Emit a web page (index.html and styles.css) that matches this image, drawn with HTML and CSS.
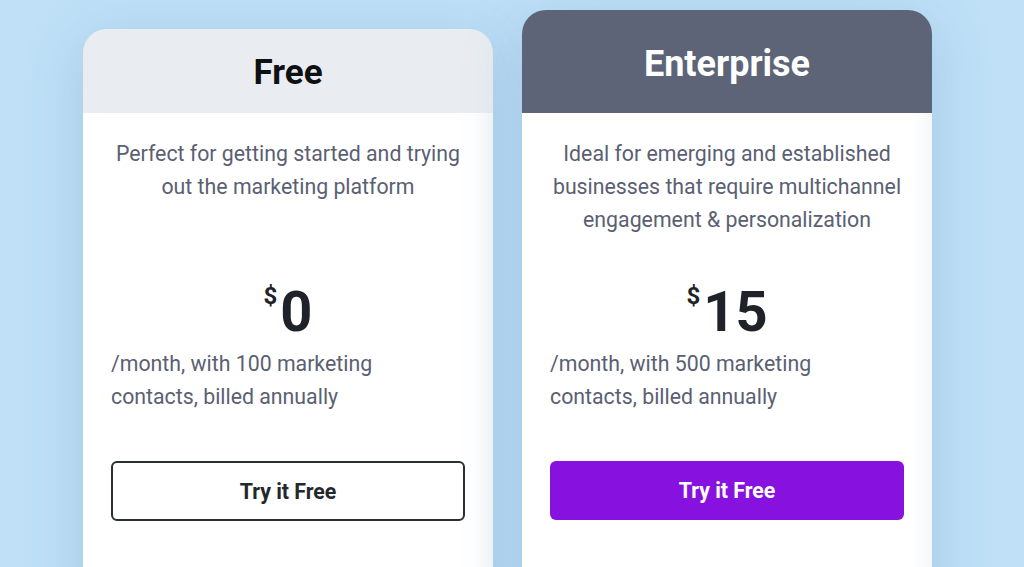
FILE: index.html
```html
<!DOCTYPE html>
<html lang="en">
<head>
<meta charset="utf-8">
<title>Pricing</title>
<link rel="stylesheet" href="styles.css">
</head>
<body>
<main class="plans">
  <section class="card card-free">
    <header class="card-head head-light"><h2>Free</h2></header>
    <div class="card-body">
      <p class="desc">Perfect for getting started and trying out the marketing platform</p>
      <div class="price"><span class="cur">$</span><span class="amt">0</span></div>
      <p class="period">/month, with 100 marketing contacts, billed annually</p>
      <a class="btn btn-outline" href="#">Try it Free</a>
    </div>
  </section>
  <section class="card card-ent">
    <header class="card-head head-dark"><h2>Enterprise</h2></header>
    <div class="card-body">
      <p class="desc">Ideal for emerging and established businesses that require multichannel engagement &amp; personalization</p>
      <div class="price"><span class="cur">$</span><span class="amt">15</span></div>
      <p class="period">/month, with 500 marketing contacts, billed annually</p>
      <a class="btn btn-fill" href="#">Try it Free</a>
    </div>
  </section>
</main>
</body>
</html>
```
FILE: styles.css
```css
* { box-sizing: border-box; }
html, body { margin: 0; height: 100%; }
body {
  background: #bfe0f7;
  font-family: Roboto, "Liberation Sans", sans-serif;
  overflow: hidden;
}
.plans {
  display: flex;
  align-items: flex-start;
  gap: 29px;
  padding: 10px 0 0 83px;
}
.card {
  width: 410px;
  border-radius: 24px 24px 0 0;
  overflow: hidden;
  box-shadow: 0 10px 60px rgba(70, 120, 170, 0.22);
  height: 620px;
  display: flex;
  flex-direction: column;
}
.card-free { margin-top: 19px; }
.card-head {
  display: flex;
  align-items: center;
  justify-content: center;
}
.card-head h2 { margin: 0; font-weight: 700; }
.head-light { background: #e9edf1; height: 84px; }
.head-light h2 { color: #0f1012; font-size: 35px; padding-top: 2px; }
.head-dark { background: #5e6477; height: 103px; }
.head-dark h2 { color: #ffffff; font-size: 36px; padding-top: 4px; }
.card-body {
  flex: 1;
  background: linear-gradient(to right, #ffffff 95%, #f6f7f9);
  padding: 24px 20px 0 28px;
}
.desc {
  margin: 0 8px 48px 0;
  min-height: 99px;
  text-align: center;
  color: #5a6072;
  font-size: 21.3px;
  line-height: 33px;
}
.price {
  display: flex;
  justify-content: center;
  align-items: flex-start;
  color: #1f2228;
  font-weight: 700;
  height: 56px;
  margin: 0 8px 7px 0;
}
.cur {
  font-size: 24px;
  line-height: 24px;
  margin-right: 3px;
}
.amt {
  font-size: 56px;
  line-height: 56px;
}
.period {
  margin: 0 0 48px;
  color: #5a6072;
  font-size: 21.3px;
  line-height: 33px;
  width: 280px;
}
.btn {
  display: flex;
  align-items: center;
  justify-content: center;
  height: 60px;
  margin-right: 8px;
  border-radius: 6px;
  font-size: 21.3px;
  font-weight: 700;
  text-decoration: none;
}
.btn-outline {
  border: 2px solid #2b2e33;
  color: #24272b;
  background: #fff;
}
.btn-fill {
  background: #8712e0;
  color: #ffffff;
  height: 59px;
}
```
